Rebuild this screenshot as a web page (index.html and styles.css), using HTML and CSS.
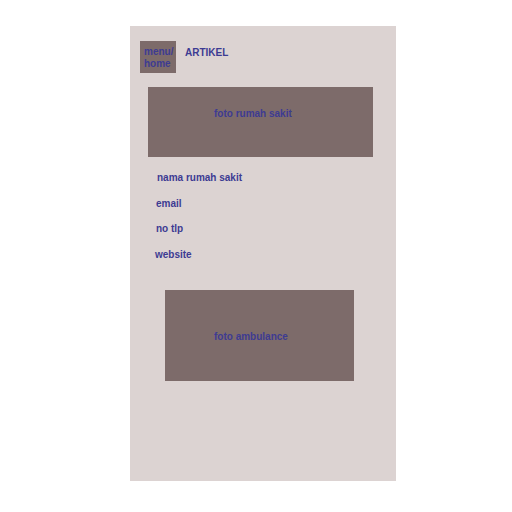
FILE: index.html
```html
<!DOCTYPE html>
<html>
<head>
<meta charset="utf-8">
<link rel="stylesheet" href="styles.css">
</head>
<body>
<div class="panel">
  <div class="header">
    <div class="menu">menu/<br>home</div>
    <div class="artikel">ARTIKEL</div>
  </div>
  <div class="foto-rs"><span>foto rumah sakit</span></div>
  <div class="info">
    <div class="line l1">nama rumah sakit</div>
    <div class="line l2">email</div>
    <div class="line l3">no tlp</div>
    <div class="line l4">website</div>
  </div>
  <div class="foto-amb"><span>foto ambulance</span></div>
</div>
</body>
</html>
```

FILE: styles.css
```css
html, body {
  margin: 0;
  padding: 0;
  background: #ffffff;
}
body {
  font-family: "Liberation Sans", Arial, sans-serif;
  font-weight: bold;
  font-size: 10px;
  color: #3d3b92;
}
.panel {
  margin: 26px 0 0 130px;
  width: 266px;
  height: 455px;
  background: #dcd3d2;
  display: flex;
  flex-direction: column;
  box-sizing: border-box;
  padding-top: 15px;
}
.header {
  display: flex;
  align-items: flex-start;
  padding-left: 10px;
  gap: 9px;
}
.menu {
  width: 36px;
  height: 32px;
  box-sizing: border-box;
  background: #7d6b6a;
  padding: 5px 0 0 4px;
  line-height: 12px;
}
.artikel {
  padding-top: 6px;
  line-height: 12px;
}
.foto-rs {
  margin: 14px 0 0 18px;
  width: 225px;
  height: 70px;
  background: #7d6b6a;
  box-sizing: border-box;
  padding: 21px 0 0 66px;
  line-height: 12px;
}
.info {
  display: flex;
  flex-direction: column;
  margin-top: 14px;
}
.line {
  box-sizing: border-box;
  height: 25px;
  padding-top: 1px;
  line-height: 12px;
}
.l1 { padding-left: 27px; height: 26px; }
.l2 { padding-left: 26px; }
.l3 { padding-left: 26px; height: 26px; }
.l4 { padding-left: 25px; }
.foto-amb {
  margin: 17px 0 0 35px;
  width: 189px;
  height: 91px;
  background: #7d6b6a;
  box-sizing: border-box;
  padding: 41px 0 0 49px;
  line-height: 12px;
}
```
